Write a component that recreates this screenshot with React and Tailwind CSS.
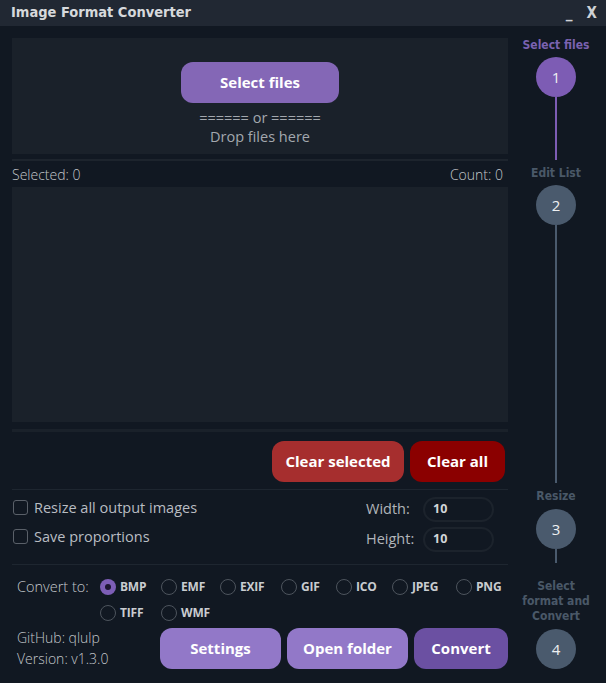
import React from "react";

const ui = { fontFamily: '"Open Sans", "Noto Sans", sans-serif' };
const tahoma = { fontFamily: '"DejaVu Sans Condensed", "DejaVu Sans", sans-serif' };

// slot widths follow the spacing in the original form
const formats = [
  { name: "BMP", w: "w-[61px]" },
  { name: "EMF", w: "w-[59px]" },
  { name: "EXIF", w: "w-[61px]" },
  { name: "GIF", w: "w-[55px]" },
  { name: "ICO", w: "w-[56px]" },
  { name: "JPEG", w: "w-[64px]" },
  { name: "PNG", w: "w-[50px]" },
  { name: "TIFF", w: "w-[61px]" },
  { name: "WMF", w: "w-[59px]" },
];

const Radio = ({ label, checked, className }) => (
  <div className={`flex items-center gap-[4px] ${className}`}>
    {checked ? (
      <span className="w-4 h-4 rounded-full bg-[#7d5eb6] flex items-center justify-center">
        <span className="w-[6px] h-[6px] rounded-full bg-[#1c1530]" />
      </span>
    ) : (
      <span className="w-4 h-4 rounded-full border border-[#4d545d]" />
    )}
    <span className="text-[12px] font-bold tracking-[-0.2px] text-[#c9ccd0]">{label}</span>
  </div>
);

const Step = ({ n, active }) => (
  <div
    className={`w-10 h-10 rounded-full flex items-center justify-center text-[15px] text-[#eef0f2] ${
      active ? "bg-[#7d5cb4]" : "bg-[#4a5a6d]"
    }`}
  >
    {n}
  </div>
);

const StepLabel = ({ children, active }) => (
  <div
    style={tahoma}
    className={`text-[12px] font-bold text-center leading-[15px] ${
      active ? "text-[#7a62b0]" : "text-[#4a5868]"
    }`}
  >
    {children}
  </div>
);

const Checkbox = ({ label }) => (
  <label className="flex items-center gap-[6px] h-[29px]">
    <span className="w-[15px] h-[15px] rounded-[3px] border border-[#5a6069]" />
    <span className="text-[14.5px] text-[#b9bdc2]">{label}</span>
  </label>
);

const SizeInput = ({ label }) => (
  <div className="flex items-center h-[30px]">
    <span className="w-[57px] text-[14.5px] text-[#b1b5ba]">{label}</span>
    <div className="w-[71px] h-[25px] rounded-full border-2 border-[#1c232c] flex items-center pl-2 text-[12.5px] font-bold text-[#d2d5d8]">
      10
    </div>
  </div>
);

export default function App() {
  return (
    <div style={ui} className="w-[606px] h-[683px] bg-[#111822] flex flex-col overflow-hidden">
      <div className="h-[26px] bg-[#212833] flex items-center justify-between pl-[11px] pr-[9px]">
        <span style={tahoma} className="text-[14.5px] font-bold text-[#d6d9dc]">
          Image Format Converter
        </span>
        <div style={tahoma} className="flex items-end gap-[14px] text-[15px] font-bold text-[#cfd2d6]">
          <span className="leading-none">_</span>
          <span className="leading-none">X</span>
        </div>
      </div>

      <div className="flex flex-1">
        <div className="w-[508px] pl-3 pt-3 flex flex-col">
          <div className="h-[116px] bg-[#1a212a] flex flex-col items-center pt-6">
            <button className="w-[158px] h-[41px] rounded-[12px] bg-[#8467b6] text-white text-[15px] font-bold">
              Select files
            </button>
            <div className="mt-[5px] text-[14.5px] leading-[19px] text-[#a3a8ae] text-center">
              ====== or ======
              <br />
              Drop files here
            </div>
          </div>
          <div className="mt-[5px] h-[2px] bg-[#1d242d]" />
          <div className="h-[26px] flex items-center justify-between text-[14px] font-light text-[#c3c7cb]">
            <span>Selected: 0</span>
            <span className="pr-[5px]">Count: 0</span>
          </div>
          <div className="h-[235px] bg-[#1a212a]" />
          <div className="mt-[7px] h-[3px] bg-[#1a212a]" />
          <div className="mt-[9px] flex justify-end gap-[6px] pr-[3px]">
            <button className="w-[132px] h-[41px] rounded-[12px] bg-[#a62e2e] text-white text-[15px] font-bold">
              Clear selected
            </button>
            <button className="w-[95px] h-[41px] rounded-[12px] bg-[#8b0000] text-white text-[15px] font-bold">
              Clear all
            </button>
          </div>
          <div className="mt-[7px] h-px bg-[#1e2630]" />
          <div className="h-[74px] flex justify-between items-start pl-px pr-[14px]">
            <div className="flex flex-col pt-[3px]">
              <Checkbox label="Resize all output images" />
              <Checkbox label="Save proportions" />
            </div>
            <div className="flex flex-col pt-[4px]">
              <SizeInput label="Width:" />
              <SizeInput label="Height:" />
            </div>
          </div>
          <div className="h-px bg-[#1e2630]" />
          <div className="mt-[13px] flex pl-[5px]">
            <span className="w-[83px] text-[14.5px] font-light text-[#c3c7cb] leading-[18px]">
              Convert to:
            </span>
            <div className="flex-1 flex flex-wrap gap-y-[8px]">
              {formats.map((f, i) => (
                <Radio key={f.name} label={f.name} checked={i === 0} className={f.w} />
              ))}
            </div>
          </div>
          <div className="mt-[5px] flex items-center">
            <div className="w-[148px] pl-[5px] text-[14px] font-light text-[#c3c7cb] leading-[21px]">
              GitHub: qlulp
              <br />
              Version: v1.3.0
            </div>
            <div className="flex gap-[6px]">
              <button className="w-[121px] h-[41px] rounded-[12px] bg-[#9278c8] text-white text-[15px] font-bold">
                Settings
              </button>
              <button className="w-[121px] h-[41px] rounded-[12px] bg-[#9278c8] text-white text-[15px] font-bold">
                Open folder
              </button>
              <button className="w-[94px] h-[41px] rounded-[12px] bg-[#6b50a2] text-white text-[15px] font-bold">
                Convert
              </button>
            </div>
          </div>
        </div>

        <div className="w-[96px] flex flex-col items-center pt-[12px] pb-[14px]">
          <StepLabel active>Select files</StepLabel>
          <div className="mt-[4px]">
            <Step n="1" active />
          </div>
          <div className="w-[2px] h-[63px] bg-[#7d5cb4]" />
          <div className="mt-[6px]">
            <StepLabel>Edit List</StepLabel>
          </div>
          <div className="mt-[4px]">
            <Step n="2" />
          </div>
          <div className="w-[2px] flex-1 bg-[#4a5a6d]" />
          <div className="mt-[6px]">
            <StepLabel>Resize</StepLabel>
          </div>
          <div className="mt-[5px]">
            <Step n="3" />
          </div>
          <div className="w-[2px] h-[14px] bg-[#4a5a6d]" />
          <div className="mt-[16px]">
            <StepLabel>
              Select
              <br />
              format and
              <br />
              Convert
            </StepLabel>
          </div>
          <div className="mt-[5px]">
            <Step n="4" />
          </div>
        </div>
      </div>
    </div>
  );
}
